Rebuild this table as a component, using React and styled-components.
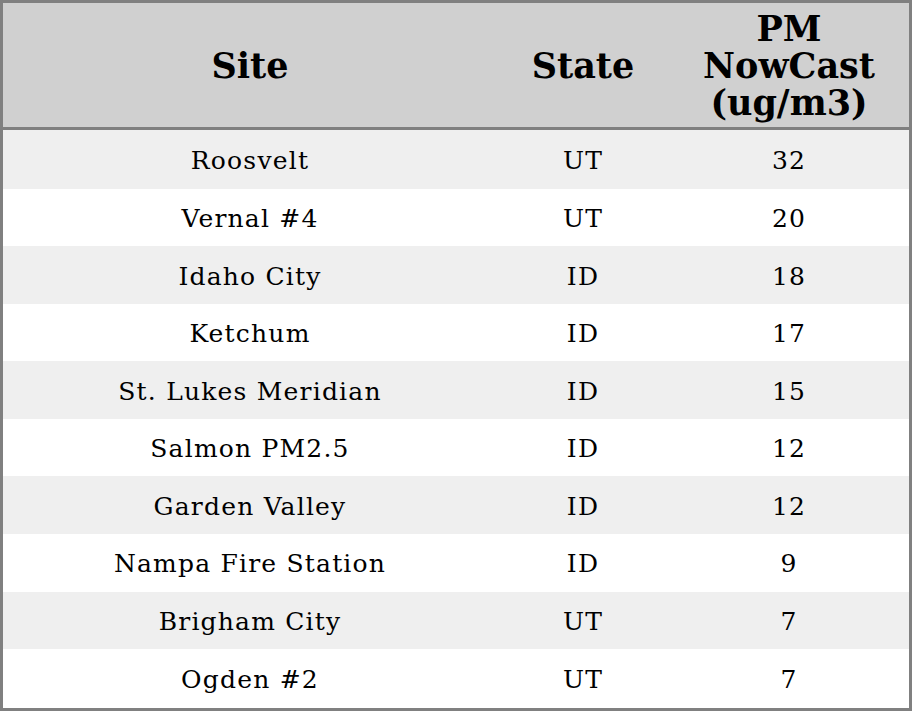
import React from "react";
import styled, {createGlobalStyle} from "styled-components";

const GlobalStyle = createGlobalStyle`
    html, body, #root {
        margin: 0;
        height: 100%;
        background: white;
    }
`;

const Table = styled.table`
    width: 100%;
    height: 100%;
    box-sizing: border-box;
    border: 3px solid #808080;
    border-collapse: collapse;
    font-family: "DejaVu Serif", serif;
    color: #000;
`;

const HeadRow = styled.tr`
    height: 127px;
`;

const HeadCell = styled.th`
    background-color: #d0d0d0;
    border-bottom: 3px solid #808080;
    font-size: 35px;
    font-weight: bold;
    line-height: 37px;
    text-align: center;
    width: ${props => props.w};
    padding: 1px 0 0 0;
`;

const Row = styled.tr`
    background-color: ${props => props.alt ? '#efefef' : '#ffffff'};
`;

const Cell = styled.td`
    font-size: 25px;
    letter-spacing: 1.2px;
    text-align: center;
    padding: 2px 0 0 0;
`;

const sites = [
    ["Roosvelt", "UT", 32],
    ["Vernal #4", "UT", 20],
    ["Idaho City", "ID", 18],
    ["Ketchum", "ID", 17],
    ["St. Lukes Meridian", "ID", 15],
    ["Salmon PM2.5", "ID", 12],
    ["Garden Valley", "ID", 12],
    ["Nampa Fire Station", "ID", 9],
    ["Brigham City", "UT", 7],
    ["Ogden #2", "UT", 7],
];

export default function App() {
    return (
        <>
            <GlobalStyle/>
            <Table>
                <thead>
                <HeadRow>
                    <HeadCell w="494px">Site</HeadCell>
                    <HeadCell w="172px">State</HeadCell>
                    <HeadCell>PM<br/>NowCast<br/>(ug/m3)</HeadCell>
                </HeadRow>
                </thead>
                <tbody>
                {sites.map((item, index) => (
                    <Row key={index} alt={index % 2 === 0}>
                        <Cell>{item[0]}</Cell>
                        <Cell>{item[1]}</Cell>
                        <Cell>{item[2]}</Cell>
                    </Row>
                ))}
                </tbody>
            </Table>
        </>
    );
}
